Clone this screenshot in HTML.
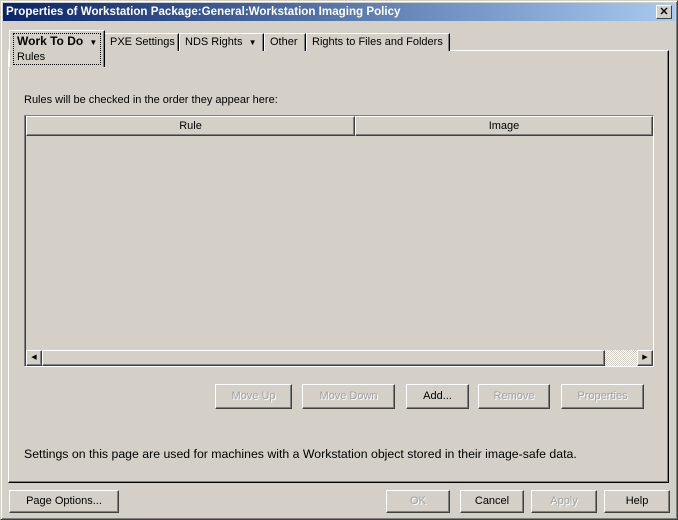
<!DOCTYPE html>
<html><head><style>
*{margin:0;padding:0;box-sizing:border-box}
body{width:678px;height:520px;background:#d4d0c8;font-family:"Liberation Sans",sans-serif;font-size:11px;color:#000;position:relative;overflow:hidden}
.a{position:absolute}
.win{left:0;top:0;width:678px;height:520px;border:1px solid;border-color:#d4d0c8 #404040 #404040 #d4d0c8;box-shadow:inset 1px 1px #fff,inset -1px -1px #808080}
.title{left:3px;top:3px;width:672px;height:18px;background:linear-gradient(to right,#0a246a,#a6caf0);color:#fff;font-weight:bold;font-size:11.6px;line-height:18px;padding-left:3px}
.x{left:656px;top:5px;width:16px;height:14px;background:#d4d0c8;border:1px solid;border-color:#fff #404040 #404040 #fff;font-size:11px;font-weight:bold;line-height:12px;text-align:center;color:#000}
.panel{left:8px;top:50px;width:661px;height:433px;border:1px solid;border-color:#fff #000 #000 #fff;box-shadow:inset -1px -1px #808080}
.tab{top:33px;height:18px;border:1px solid;border-bottom:none;border-color:#fff #000 #000 #fff;box-shadow:inset -1px 0 #808080;line-height:17px;padding-left:5px;background:#d4d0c8}
.btn{height:25px;border:1px solid;border-color:#fff #404040 #404040 #fff;box-shadow:inset -1px -1px #808080;text-align:center;line-height:22px;background:#d4d0c8}
.dis{color:#a0a0a0;text-shadow:1px 1px #fff}
.hdr{top:116px;height:20px;border:1px solid;border-color:#fff #404040 #404040 #fff;box-shadow:inset -1px -1px #808080;text-align:center;line-height:19px}
</style></head><body>
<div class="a win"></div>
<div class="a title">Properties of Workstation Package:General:Workstation Imaging Policy</div>
<div class="a x">✕</div>
<div class="a panel"></div>
<div class="a tab" style="left:104px;width:75px">PXE Settings</div>
<div class="a tab" style="left:179px;width:85px">NDS Rights&nbsp; <span style="font-size:8px">▼</span></div>
<div class="a tab" style="left:264px;width:42px">Other</div>
<div class="a tab" style="left:306px;width:144px">Rights to Files and Folders</div>
<div class="a" style="left:9px;top:30px;width:96px;height:37px;background:#d4d0c8;border:1px solid;border-bottom:none;border-color:#fff #000 #000 #fff;box-shadow:inset -1px 0 #808080"></div>
<div class="a" style="left:13px;top:33px;width:88px;height:32px;border:1px dotted #000;padding-left:3px;line-height:15px"><b style="font-size:12px">Work To Do</b>&nbsp; <span style="font-size:8px">▼</span><br>Rules</div>
<div class="a" style="left:24px;top:94px">Rules will be checked in the order they appear here:</div>
<div class="a" style="left:24px;top:115px;width:630px;height:252px;border:1px solid;border-color:#808080 #fff #fff #808080;box-shadow:inset 1px 1px #404040"></div>
<div class="a hdr" style="left:26px;width:329px">Rule</div>
<div class="a hdr" style="left:355px;width:298px">Image</div>
<div class="a" style="left:26px;top:350px;width:627px;height:16px;background:#fff"></div>
<div class="a btn" style="left:26px;top:350px;width:16px;height:16px;font-size:7px;line-height:14px">◀</div>
<div class="a btn" style="left:42px;top:350px;width:563px;height:16px"></div>
<div class="a" style="left:605px;top:350px;width:32px;height:16px;background:repeating-conic-gradient(#d4d0c8 0 25%,#fff 0 50%) 0 0/2px 2px"></div>
<div class="a btn" style="left:637px;top:350px;width:16px;height:16px;font-size:7px;line-height:14px">▶</div>
<div class="a btn dis" style="left:215px;top:384px;width:77px">Move Up</div>
<div class="a btn dis" style="left:302px;top:384px;width:93px">Move Down</div>
<div class="a btn" style="left:406px;top:384px;width:63px">Add...</div>
<div class="a btn dis" style="left:478px;top:384px;width:72px">Remove</div>
<div class="a btn dis" style="left:561px;top:384px;width:83px">Properties</div>
<div class="a" style="left:24px;top:447px;font-size:12.3px">Settings on this page are used for machines with a Workstation object stored in their image-safe data.</div>
<div class="a btn" style="left:9px;top:490px;width:110px;height:23px;line-height:20px">Page Options...</div>
<div class="a btn dis" style="left:386px;top:490px;width:64px;height:23px;line-height:20px">OK</div>
<div class="a btn" style="left:460px;top:490px;width:64px;height:23px;line-height:20px">Cancel</div>
<div class="a btn dis" style="left:531px;top:490px;width:66px;height:23px;line-height:20px">Apply</div>
<div class="a btn" style="left:604px;top:490px;width:66px;height:23px;line-height:20px">Help</div>
</body></html>
